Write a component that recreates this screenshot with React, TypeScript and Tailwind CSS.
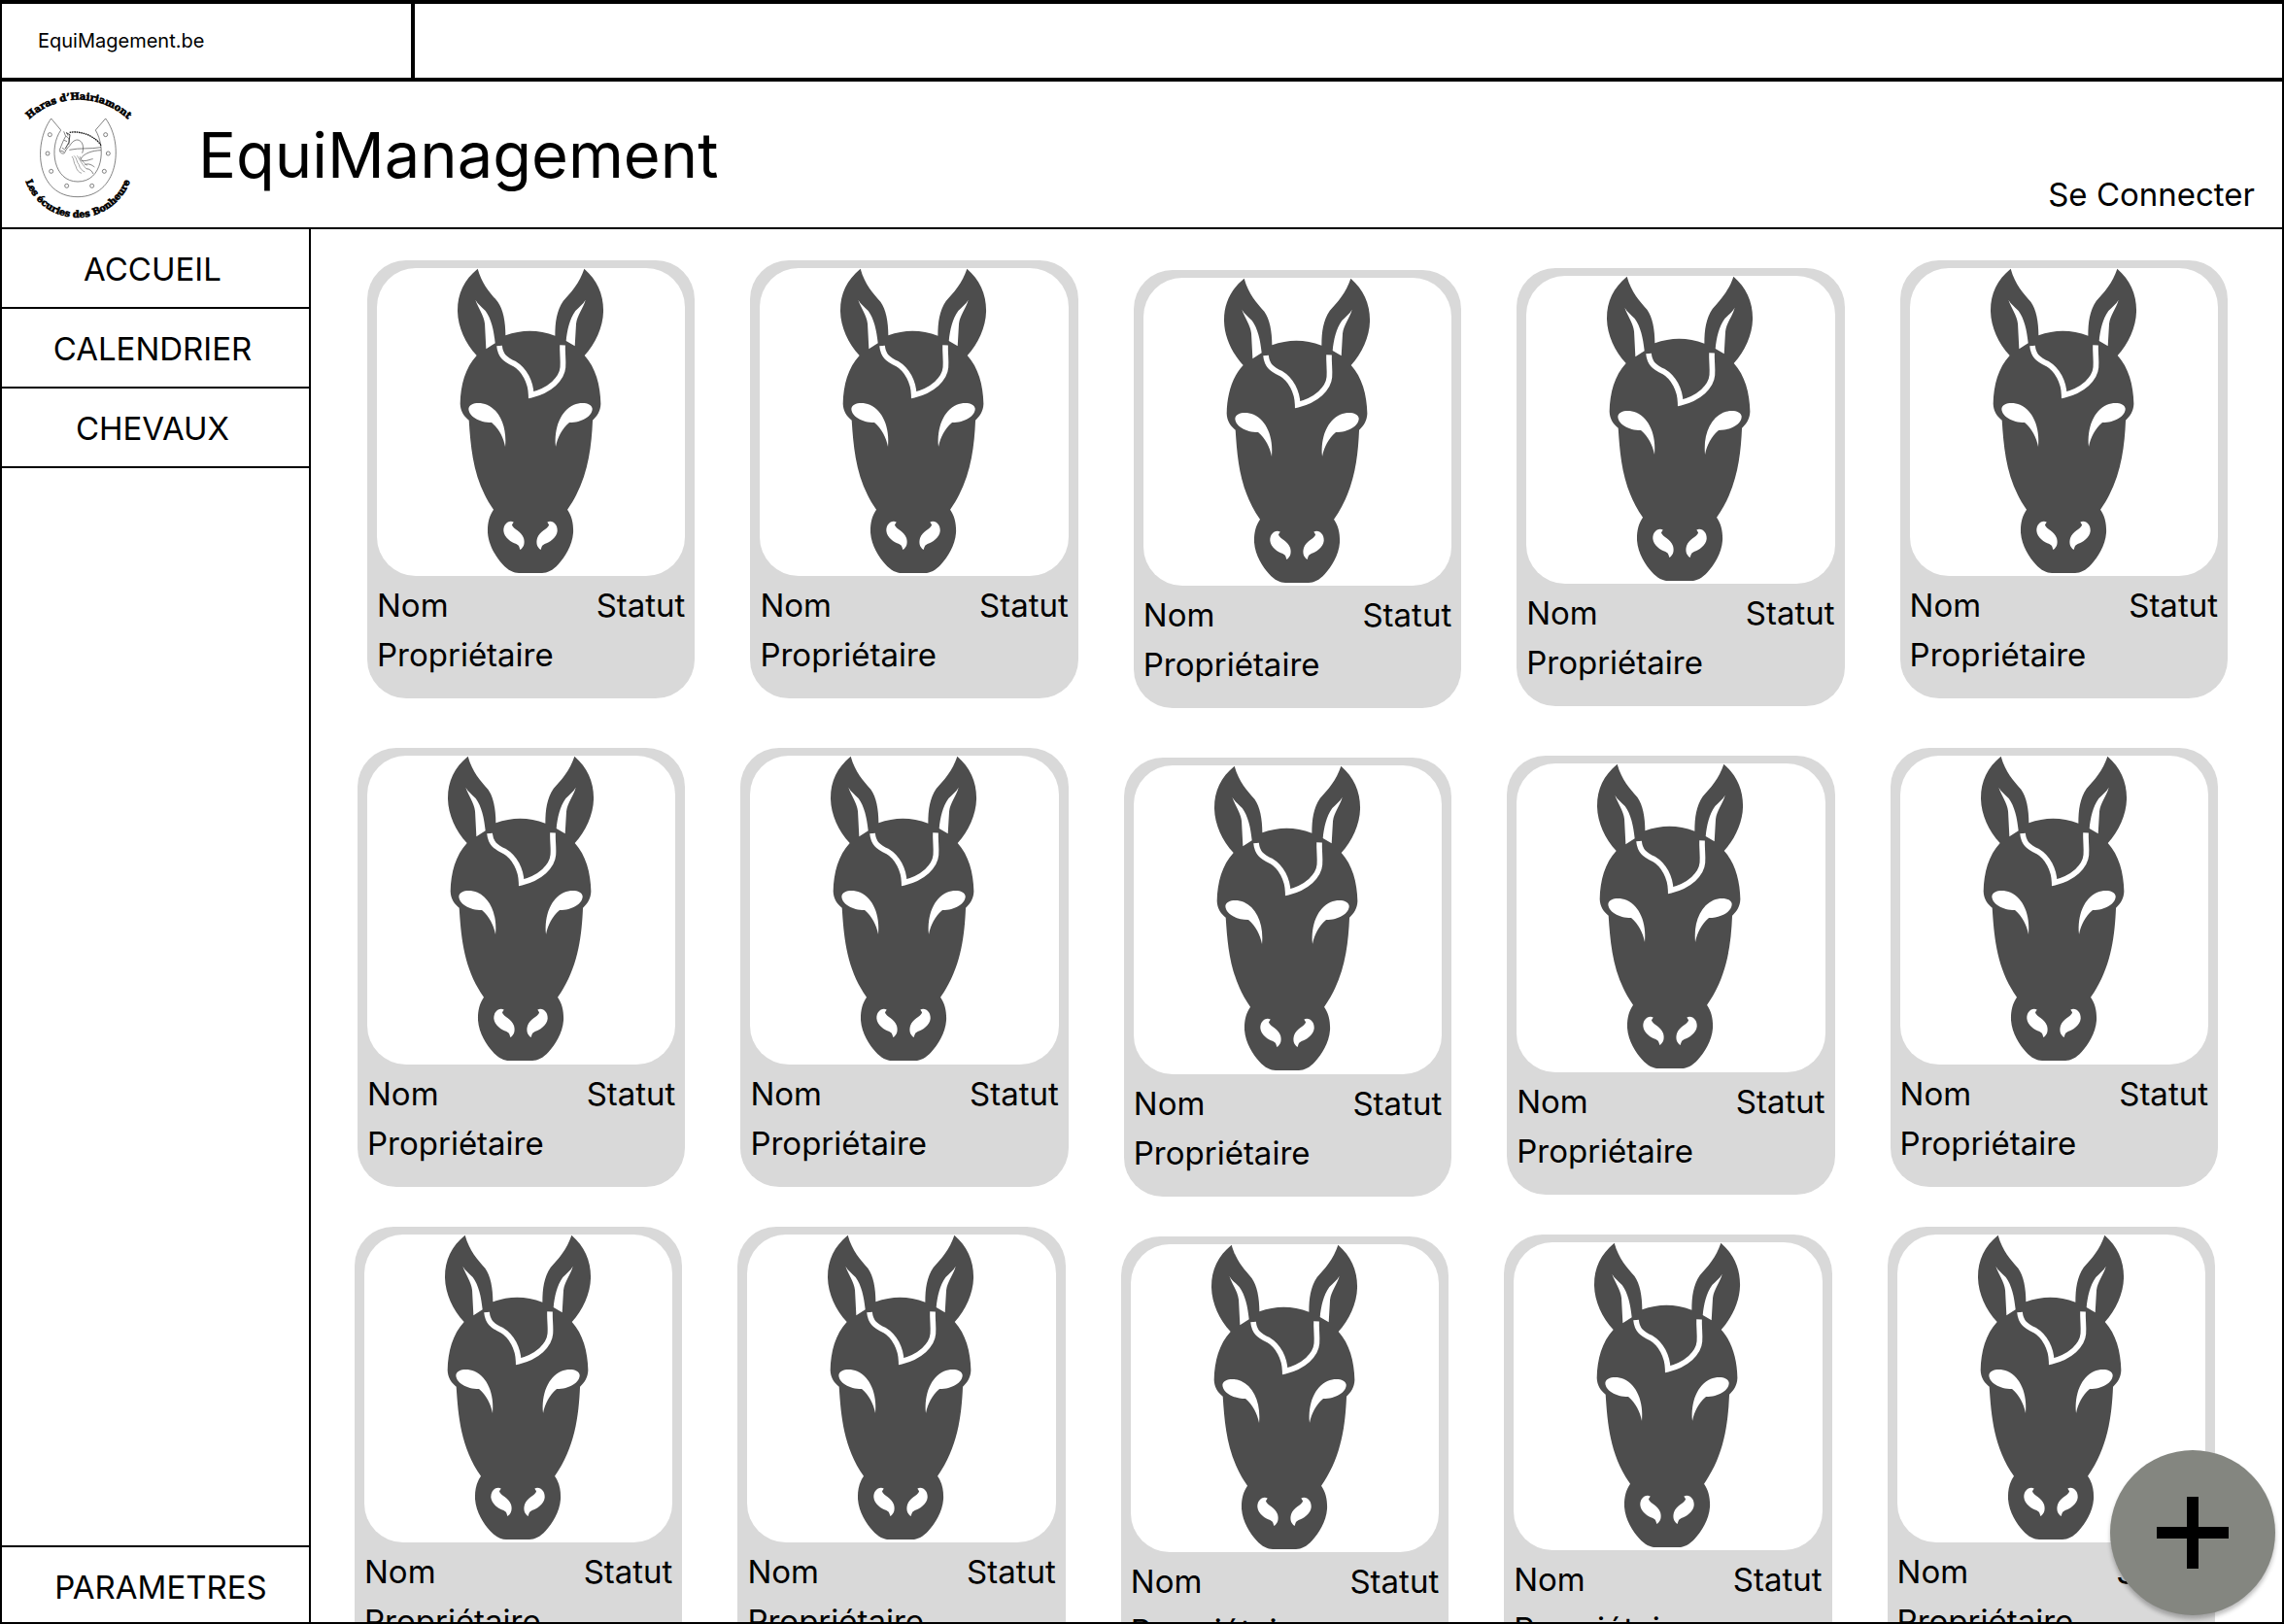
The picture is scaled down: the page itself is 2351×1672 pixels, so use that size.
import React from "react";

function HorseHead() {
  return (
    <svg viewBox="85 78 952 952" className="block h-full w-full" role="img" aria-label="Cheval">
      <path
        fill="#4d4d4d"
        d="M396 80C410 130 435 155 458 182C475 205 482 245 482 286Q558 258 635 287C635 245 640 210 660 180C685 152 710 125 725 80C765 115 785 160 784 212C783 260 760 310 726 348C760 385 775 440 776 497C775 520 765 535 751 548C747 640 735 736 673 824C688 845 692 870 691 895C688 935 665 970 645 993C628 1012 610 1020 595 1020L523 1020C508 1020 490 1012 473 993C453 970 430 935 427 895C426 870 430 845 445 824C383 736 375 640 369 548C353 535 343 520 342 497C343 440 358 385 393 348C358 310 335 260 334 212C333 160 353 115 396 80Z"
      />
      <g fill="#fff">
        <path d="M389 176C398 203 415 222 418 250L422 328L450 310C446 270 438 235 420 210C408 197 397 190 389 176Z" />
        <path d="M729 176C722 203 703 222 700 250L696 319L669 303C672 270 680 235 698 210C710 197 721 190 729 176Z" />
        <path d="M368 512C370 495 400 490 425 500C465 518 487 570 481 630C475 600 462 575 439 555C400 555 368 535 368 512Z" />
        <path d="M750 512C748 495 718 490 693 500C653 518 631 570 637 630C643 600 656 575 679 555C718 555 750 535 750 512Z" />
        <path d="M507 862C490 855 475 870 476 890C478 910 500 925 515 930C525 935 525 942 527 948C540 940 542 925 538 912C530 890 508 885 502 872C502 868 505 866 507 862Z" />
        <path d="M611 862C628 855 643 870 642 890C640 910 618 925 603 930C593 935 593 942 591 948C578 940 576 925 580 912C588 890 610 885 616 872C616 868 613 866 611 862Z" />
      </g>
      <path
        fill="none"
        stroke="#fff"
        strokeWidth="17"
        d="M463 318C466 348 480 360 510 374C540 392 560 430 561 470C620 455 656 420 659 385C661 360 657 345 658 316"
      />
    </svg>
  );
}

const nails = [
  [154, 175],
  [147, 233],
  [158, 288],
  [206, 333],
  [284, 333],
  [322, 288],
  [334, 233],
  [326, 175],
];

function Logo() {
  return (
    <svg viewBox="60 35 360 405" className="h-[135px] w-[120px] shrink-0" role="img" aria-label="Haras d'Hairiamont">
      <defs>
        <path id="arc-top" d="M82 136A222 222 0 0 1 404 136" />
        <path id="arc-bottom" d="M74 304A172 172 0 0 0 406 304" />
      </defs>
      <g fontFamily="'DejaVu Serif', serif" fontWeight="700" fill="#000" stroke="#000" strokeWidth="2" textAnchor="middle">
        <text fontSize="30">
          <textPath href="#arc-top" startOffset="50%">Haras d’Hairiamont</textPath>
        </text>
        <text fontSize="29">
          <textPath href="#arc-bottom" startOffset="50%">Les écuries des Bonheure</textPath>
        </text>
      </g>
      <g fill="none" stroke="#444" strokeWidth="2">
        <path d="M158 125L188 161C150 215 165 320 240 320C318 320 328 215 295 161L326 125C385 205 365 367 240 367C112 367 100 205 158 125Z" />
        {nails.map(([x, y]) => (
          <circle key={`${x}-${y}`} cx={x} cy={y} r="6" />
        ))}
        <path d="M197 165L203 180C196 190 190 208 184 222C184 230 192 236 199 232C204 220 210 214 216 208C222 198 232 188 244 192C256 198 260 215 254 232" />
        <path d="M203 180C212 182 216 192 212 206M206 168L210 178M192 216L202 222M198 192L207 196M186 224L198 228" />
        <path d="M204 169L216 175L213 198L202 218" strokeWidth="3" />
        <path d="M214 222C245 215 280 220 312 214M312 223C285 224 258 232 248 252M250 254C262 260 280 250 287 250M262 268C275 262 285 270 292 275M266 280C278 280 284 288 288 296" />
        <path d="M222 242C230 250 226 262 234 272C236 284 244 292 252 294M228 240C238 246 236 260 244 268C246 280 254 286 262 290M238 240C246 250 250 262 266 280M246 242C252 256 262 266 270 270" stroke="#777" />
        <path d="M215 168C250 162 295 180 312 208" stroke="#111" strokeWidth="4" strokeDasharray="5 2" />
      </g>
    </svg>
  );
}

function HorseCard({ offset }: { offset: string }) {
  return (
    <article className={`rounded-[40px] bg-[#d9d9d9] px-[10px] pt-2 pb-[25px] ${offset}`}>
      <div className="aspect-square overflow-hidden rounded-[40px] bg-white">
        <HorseHead />
      </div>
      <div className="mt-[10px] flex justify-between">
        <h2>Nom</h2>
        <span>Statut</span>
      </div>
      <p className="mt-[11px]">Propriétaire</p>
    </article>
  );
}

const offsets = ["mt-0", "mt-0", "mt-[10px]", "mt-2", "mt-0"];
const rows = ["pl-[58px] pr-[56px]", "mt-[41px] pl-[48px] pr-[66px]", "mt-[31px] pl-[45px] pr-[69px]"];

const links = ["ACCUEIL", "CALENDRIER", "CHEVAUX"];

export default function App() {
  return (
    <div className="relative flex h-screen flex-col overflow-hidden border-x-2 border-t-4 border-b-2 border-black bg-white font-['Inter',sans-serif] text-[33px] leading-[40px] text-black">
      <div className="flex h-20 shrink-0 border-b-4 border-black text-xl">
        <div className="flex w-[425px] items-center border-r-4 border-black pl-[37px]">EquiMagement.be</div>
      </div>

      <header className="flex shrink-0 items-center border-b-2 border-black pt-2 pr-7 pb-[7px] pl-[18px]">
        <Logo />
        <h1 className="ml-16 text-[65px] leading-[80px]">EquiManagement</h1>
        <a href="#connexion" className="mb-[7px] ml-auto self-end">
          Se Connecter
        </a>
      </header>

      <div className="flex min-h-0 flex-1">
        <nav className="flex w-[318px] shrink-0 flex-col border-r-2 border-black text-center">
          {links.map((label) => (
            <a key={label} href={`#${label.toLowerCase()}`} className="border-b-2 border-black pt-[21px] pr-[6px] pb-[19px]">
              {label}
            </a>
          ))}
          <a href="#parametres" className="mt-auto border-t-2 border-black pt-[21px] pb-4 pl-[11px]">
            PARAMETRES
          </a>
        </nav>

        <main className="min-w-0 flex-1 overflow-hidden pt-8">
          {rows.map((spacing) => (
            <section key={spacing} className={`grid grid-cols-5 items-start gap-x-[57px] ${spacing}`}>
              {offsets.map((offset, i) => (
                <HorseCard key={i} offset={offset} />
              ))}
            </section>
          ))}
        </main>
      </div>

      <button
        type="button"
        aria-label="Ajouter un cheval"
        className="absolute right-[7px] bottom-[7px] flex size-[170px] items-center justify-center rounded-full bg-[#848680] shadow-[0_4px_4px_rgba(0,0,0,0.25)]"
      >
        <svg viewBox="0 0 74 74" className="size-[74px]" aria-hidden="true">
          <path d="M37 0V74M0 37H74" stroke="#000" strokeWidth="12" />
        </svg>
      </button>
    </div>
  );
}
